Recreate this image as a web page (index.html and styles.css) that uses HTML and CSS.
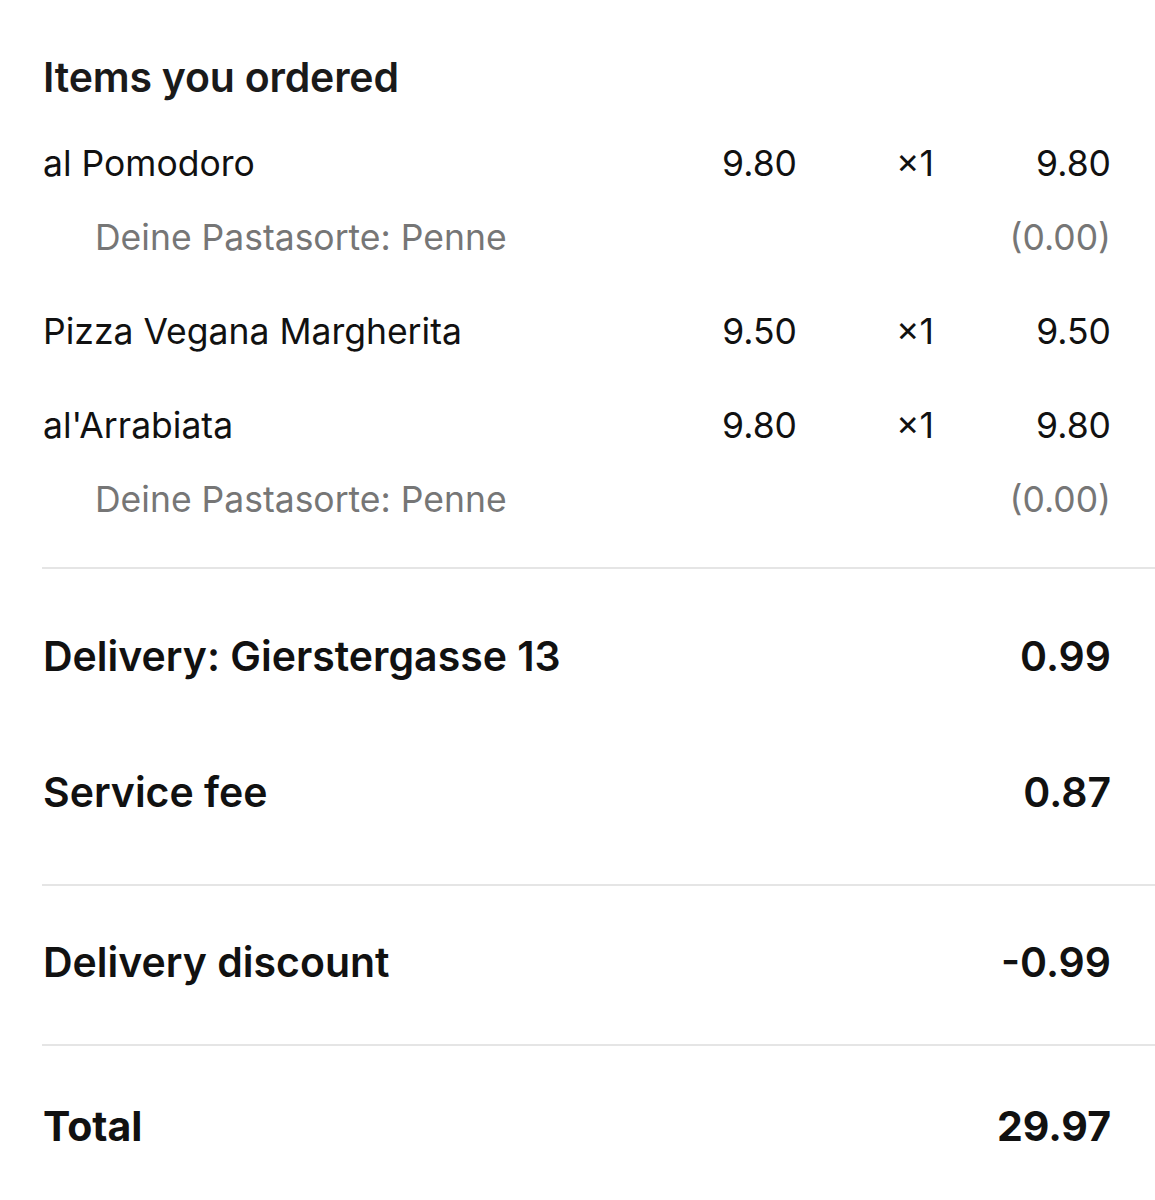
FILE: index.html
```html
<!DOCTYPE html>
<html lang="en">
<head>
  <meta charset="UTF-8">
  <meta name="viewport" content="width=device-width, initial-scale=1.0">
  <title>Order summary</title>
  <link rel="stylesheet" href="styles.css">
</head>
<body>

  <main class="receipt">

    <!-- Ordered items -->
    <section class="items">
      <h2 class="items-title">Items you ordered</h2>

      <div class="item">
        <div class="item-row">
          <span class="name">al Pomodoro</span>
          <span class="price">9.80</span>
          <span class="qty">×1</span>
          <span class="sum">9.80</span>
        </div>
        <div class="item-row option">
          <span class="name">Deine Pastasorte: Penne</span>
          <span class="price"></span>
          <span class="qty"></span>
          <span class="sum">(0.00)</span>
        </div>
      </div>

      <div class="item">
        <div class="item-row">
          <span class="name">Pizza Vegana Margherita</span>
          <span class="price">9.50</span>
          <span class="qty">×1</span>
          <span class="sum">9.50</span>
        </div>
      </div>

      <div class="item">
        <div class="item-row">
          <span class="name">al'Arrabiata</span>
          <span class="price">9.80</span>
          <span class="qty">×1</span>
          <span class="sum">9.80</span>
        </div>
        <div class="item-row option">
          <span class="name">Deine Pastasorte: Penne</span>
          <span class="price"></span>
          <span class="qty"></span>
          <span class="sum">(0.00)</span>
        </div>
      </div>
    </section>

    <!-- Fees -->
    <section class="fees">
      <div class="line">
        <span>Delivery: Gierstergasse 13</span>
        <span>0.99</span>
      </div>
      <div class="line">
        <span>Service fee</span>
        <span>0.87</span>
      </div>
    </section>

    <!-- Discounts -->
    <section class="discounts">
      <div class="line">
        <span>Delivery discount</span>
        <span>-0.99</span>
      </div>
    </section>

    <!-- Total -->
    <section class="total">
      <div class="line">
        <span>Total</span>
        <span>29.97</span>
      </div>
    </section>

  </main>

</body>
</html>
```

FILE: styles.css
```css
/* Basic Reset */
* {
  margin: 0;
  padding: 0;
  box-sizing: border-box;
}

body {
  font-family: 'Inter', 'Liberation Sans', sans-serif;
  background-color: #ffffff;
  color: #111111;
}

.receipt {
  margin-left: 42px;
}

/* Items Section */
.items {
  padding: 53px 44px 20px 1px;
}

.items-title {
  font-size: 41px;
  font-weight: 600;
  line-height: 48px;
  color: #1a1a1a;
  letter-spacing: -0.2px;
}

.item {
  display: flex;
  flex-direction: column;
  gap: 34px;
  padding: 27px 0;
}

.item:first-of-type {
  padding-top: 43px;
}

.item-row {
  display: grid;
  grid-template-columns: 1fr 120px 137px 177px;
  font-size: 35.5px;
  line-height: 40px;
}

.item-row .price,
.item-row .qty,
.item-row .sum {
  text-align: right;
}

.item-row.option {
  color: #767676;
}

.item-row.option .name {
  padding-left: 52px;
}

/* Summary lines */
.line {
  display: flex;
  justify-content: space-between;
  align-items: center;
  font-size: 41px;
  font-weight: 600;
  line-height: 48px;
  padding-right: 44px;
  padding-left: 1px;
}

.fees,
.discounts,
.total {
  border-top: 2px solid #e5e5e5;
}

.fees {
  padding: 19px 0 24px;
}

.fees .line {
  height: 136px;
}

.discounts {
  padding: 52px 0 58px;
}

.total {
  padding-top: 56px;
  padding-bottom: 40px;
}

.total .line {
  font-weight: 700;
}
```
